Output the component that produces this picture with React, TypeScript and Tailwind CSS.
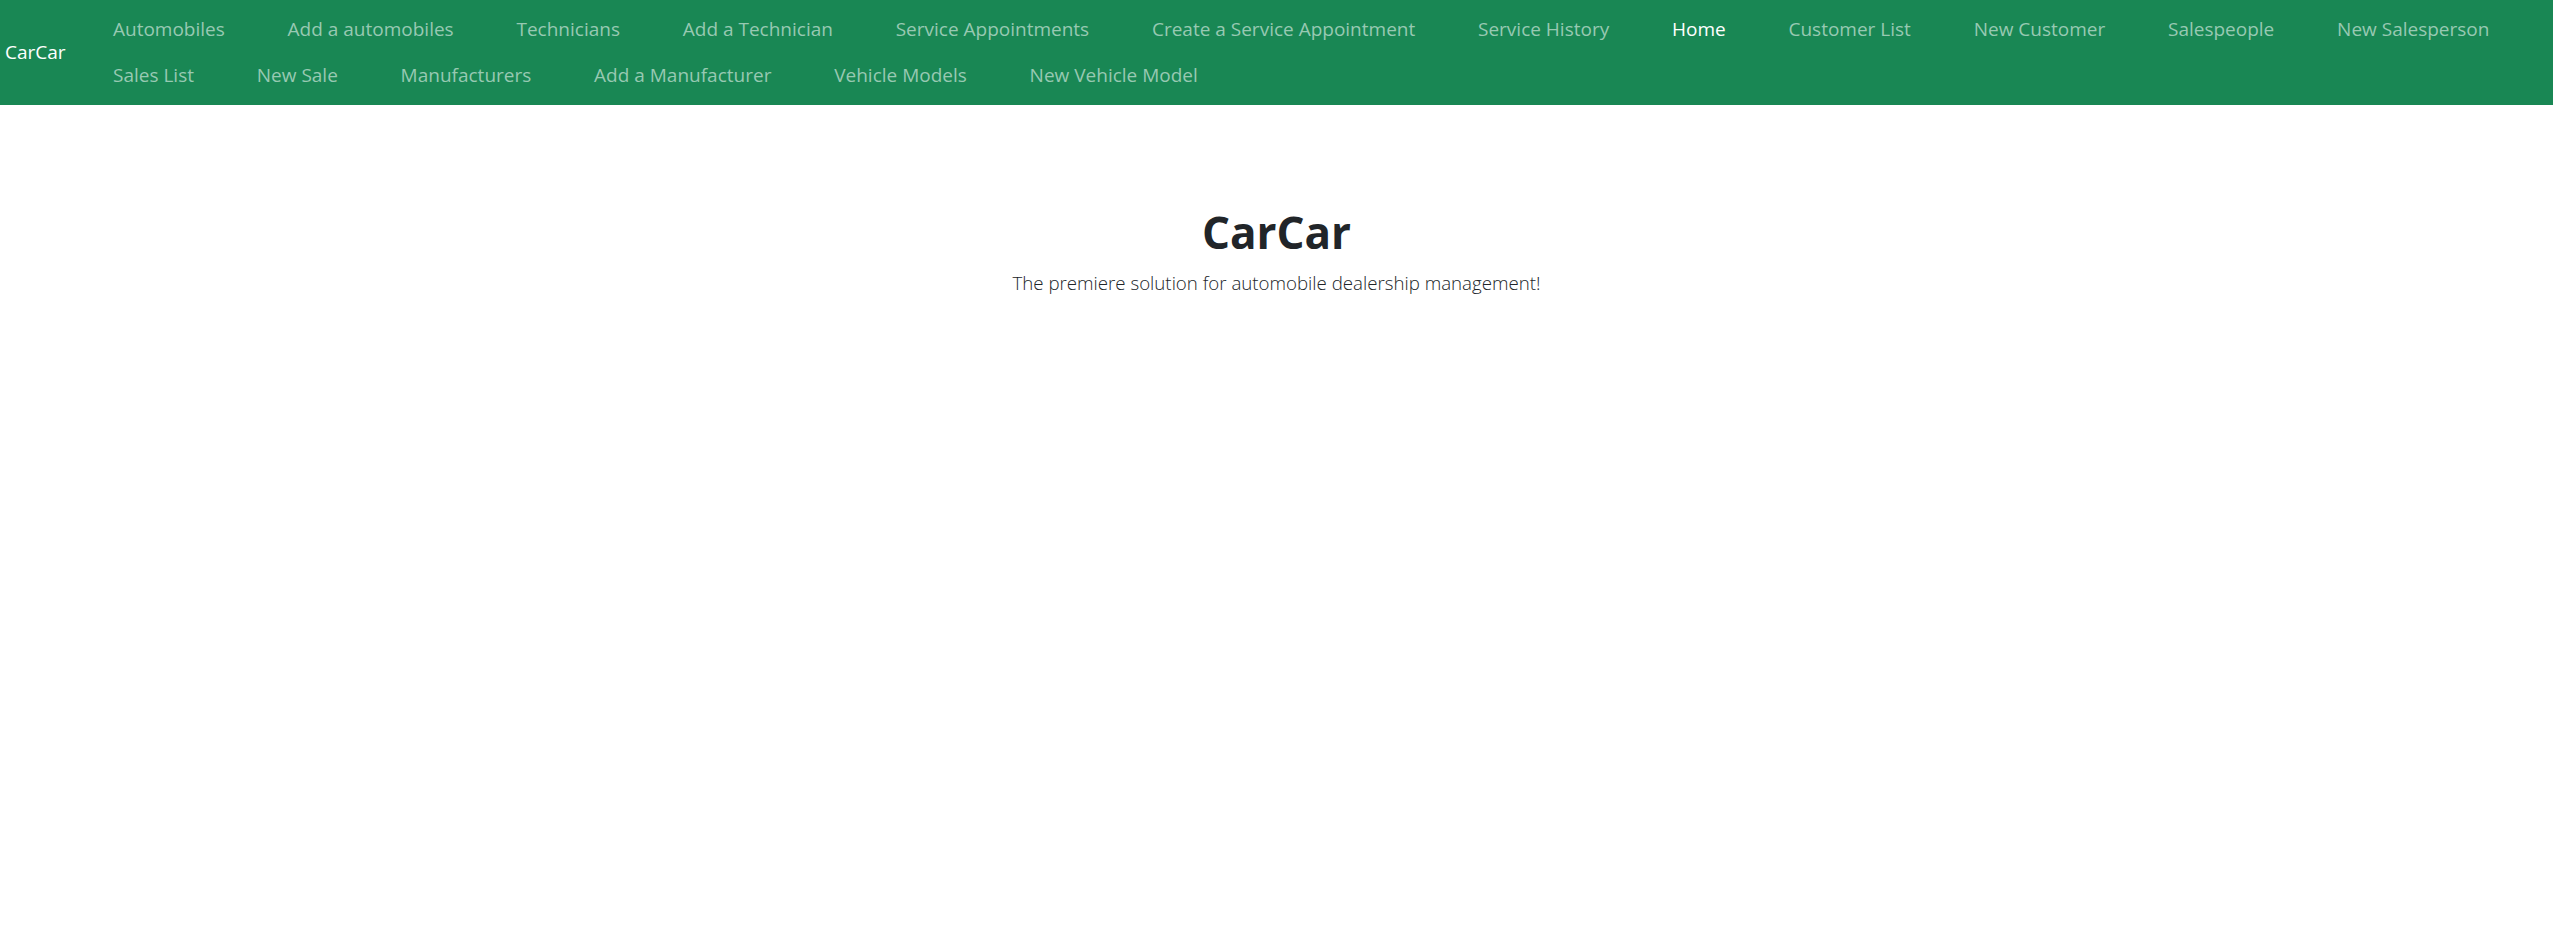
import React from "react";

const links = [
  "Automobiles",
  "Add a automobiles",
  "Technicians",
  "Add a Technician",
  "Service Appointments",
  "Create a Service Appointment",
  "Service History",
  "Home",
  "Customer List",
  "New Customer",
  "Salespeople",
  "New Salesperson",
  "Sales List",
  "New Sale",
  "Manufacturers",
  "Add a Manufacturer",
  "Vehicle Models",
  "New Vehicle Model",
];

export default function App() {
  return (
    <div className="min-h-screen bg-white" style={{ fontFamily: '"Segoe UI", "Open Sans", "Noto Sans", sans-serif' }}>
      <nav className="flex items-center bg-[#198754] pt-[6px] pb-[7px]">
        <a href="#" className="ml-[5px] mr-[16px] shrink-0 text-[19px] leading-[30px] text-white">
          CarCar
        </a>
        <ul className="flex flex-1 flex-wrap">
          {links.map((t) => (
            <li key={t}>
              <a
                href="#"
                className={
                  "block px-[31.4px] py-2 text-[19px] leading-[30px] " +
                  (t === "Home" ? "text-white" : "text-[#97c9b2]")
                }
              >
                {t}
              </a>
            </li>
          ))}
        </ul>
      </nav>
      <main className="pt-[101px] text-center text-[#212529]">
        <h1 className="text-[44px] font-bold leading-[52px]">CarCar</h1>
        <p className="mt-[10px] text-[18.7px] font-light leading-[30px]">
          The premiere solution for automobile dealership management!
        </p>
      </main>
    </div>
  );
}
